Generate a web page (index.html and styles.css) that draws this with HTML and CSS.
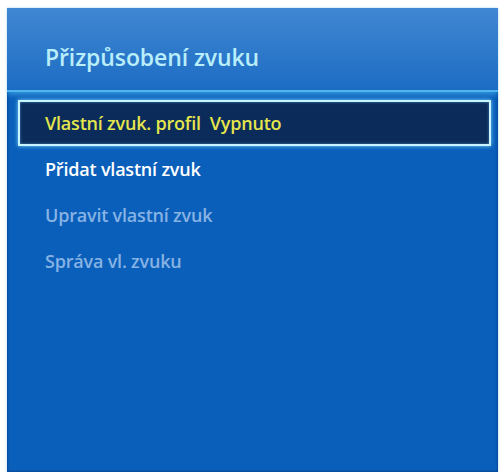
FILE: index.html
```html
<!DOCTYPE html>
<html lang="cs">
<head>
	<meta charset="UTF-8">
	<title>Přizpůsobení zvuku</title>
	<link rel="stylesheet" href="styles.css">
</head>
<body>
	<div class="panel">
		<div class="head">
			<h1>Přizpůsobení zvuku</h1>
		</div>
		<ul class="menu">
			<li class="sel">Vlastní zvuk. profil&nbsp; Vypnuto</li>
			<li class="on">Přidat vlastní zvuk</li>
			<li class="off">Upravit vlastní zvuk</li>
			<li class="off">Správa vl. zvuku</li>
		</ul>
	</div>
</body>
</html>
```

FILE: styles.css
```css
body,h1,ul,li{margin: 0;padding: 0;}
body{background: #fff;font-family: "Open Sans", "Noto Sans", sans-serif;}
ul,li{list-style: none;}
.panel{width: 491px;height: 464px;margin: 8px 0 0 7px;background: #0a5fba;box-shadow: inset 0 0 3px rgba(0,30,80,.6), 0 0 2px rgba(120,190,240,.7);overflow: hidden;}
.head{height: 82px;background: linear-gradient(#4087d2, #2b77c9 60%, #1c6cc4);border-bottom: 2px solid #4fb6ee;box-shadow: 0 2px 6px rgba(90,200,255,.6);}
h1{padding: 33px 0 0 38px;font-size: 23px;line-height: 32px;font-weight: 600;color: #b9eefa;letter-spacing: -.1px;}
.menu{padding: 8px 7px 0 11px;}
.menu li{height: 46px;line-height: 46px;padding-left: 27px;font-size: 18px;font-weight: 600;letter-spacing: -.2px;}
.menu .sel{height: 42px;line-height: 42px;padding-left: 25px;background: #0b2b5a;border: 2px solid #c8f4ff;box-shadow: 0 0 4px #7fdcff, inset 0 0 3px rgba(120,220,255,.5);color: #e4e64c;}
.menu .on{color: #fff;}
.menu .off{color: #86b3e4;}
```
